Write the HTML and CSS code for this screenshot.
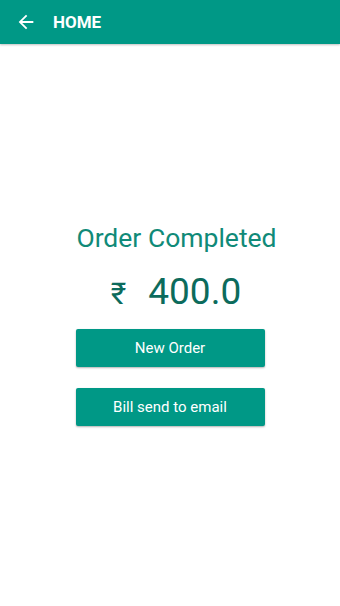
FILE: index.html
```html
<!DOCTYPE html>
<html>
<head>
<meta charset="utf-8">
<link rel="stylesheet" href="styles.css">
</head>
<body>
<div class="app">
  <header class="toolbar">
    <svg class="back" width="22" height="22" viewBox="0 0 24 24"><path d="M20 11H7.83l5.59-5.59L12 4l-8 8 8 8 1.41-1.41L7.83 13H20v-2z" fill="#fff"/></svg>
    <span class="title">HOME</span>
  </header>
  <main class="content">
    <div class="status">Order Completed</div>
    <div class="amount"><span class="rupee">₹</span><span class="value">400.0</span></div>
    <button class="btn btn-first">New Order</button>
    <button class="btn">Bill send to email</button>
  </main>
</div>
</body>
</html>
```
FILE: styles.css
```css
html, body {
  margin: 0;
  padding: 0;
  background: #fff;
  font-family: Roboto, "Noto Sans", sans-serif;
}
.app {
  width: 340px;
  height: 606px;
  display: flex;
  flex-direction: column;
}
.toolbar {
  height: 44px;
  background: #009886;
  display: flex;
  align-items: center;
  padding-left: 15px;
  box-shadow: 0 1px 2px rgba(0,0,0,0.25);
  flex-shrink: 0;
}
.back {
  display: block;
}
.title {
  color: #fff;
  font-weight: 700;
  font-size: 17px;
  margin-left: 16px;
}
.content {
  display: flex;
  flex-direction: column;
  align-items: center;
  padding-top: 179px;
}
.status {
  color: #108a78;
  font-size: 26.5px;
  line-height: 30px;
  padding-left: 13px;
}
.amount {
  margin-top: 19px;
  display: flex;
  align-items: baseline;
  color: #0c6b5c;
  line-height: 40px;
  padding-left: 12px;
}
.rupee {
  font-size: 30px;
  margin-right: 22px;
}
.value {
  font-size: 37px;
}
.btn {
  width: 189px;
  height: 38px;
  background: #009886;
  color: #fff;
  border: none;
  border-radius: 2px;
  font-family: Roboto, "Noto Sans", sans-serif;
  font-size: 15px;
  font-weight: 400;
  box-shadow: 0 1px 2px rgba(0,0,0,0.3);
  margin-top: 21px;
  padding: 0;
}
.btn-first {
  margin-top: 15px;
}
```
